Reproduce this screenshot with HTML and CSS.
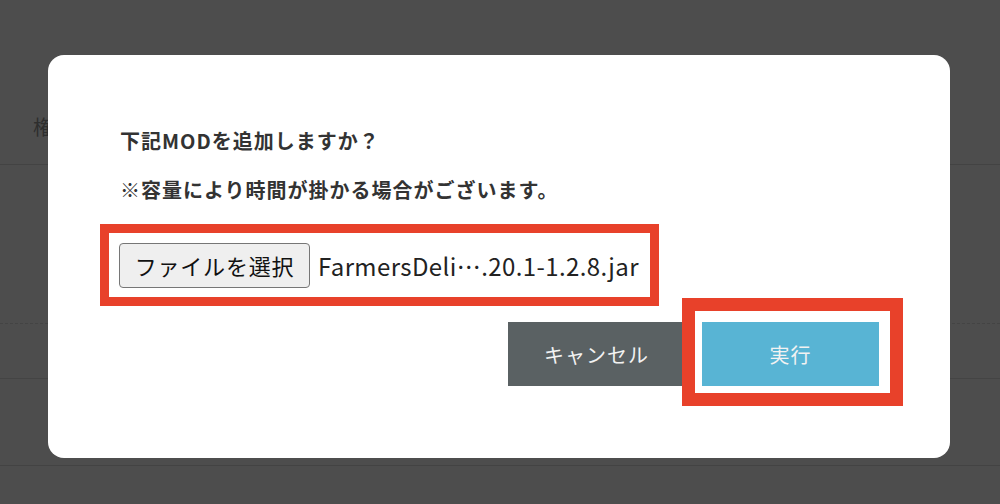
FILE: index.html
```html
<!DOCTYPE html>
<html lang="ja">
<head>
<meta charset="utf-8">
<title>MOD追加</title>
<link rel="stylesheet" href="styles.css">
</head>
<body>
<div class="page">
  <div class="page-head"><span class="tab-label">権限設定</span></div>
  <div class="page-row row-a"></div>
  <div class="page-row row-b"></div>
  <div class="page-row row-c"></div>
</div>
<div class="modal">
  <p class="msg">下記MODを追加しますか？</p>
  <p class="msg">※容量により時間が掛かる場合がございます。</p>
  <div class="file-box">
    <button class="file-btn" type="button">ファイルを選択</button>
    <span class="file-name">FarmersDeli….20.1-1.2.8.jar</span>
  </div>
  <div class="actions">
    <button class="btn btn-cancel" type="button">キャンセル</button>
    <button class="btn btn-run" type="button">実行</button>
  </div>
</div>
</body>
</html>
```
FILE: styles.css
```css
* { box-sizing: border-box; }
html, body {
  margin: 0;
  padding: 0;
  width: 1000px;
  height: 504px;
  overflow: hidden;
  background: #4d4d4d;
  font-family: "Noto Sans CJK JP", "Noto Sans", sans-serif;
}
.page {
  width: 1000px;
}
.page-head {
  height: 165px;
  border-bottom: 1px solid #434343;
  padding: 112px 0 0 33px;
}
.tab-label {
  font-size: 20px;
  line-height: 30px;
  color: #2e2e2e;
}
.row-a {
  height: 159px;
  border-bottom: 1px dashed #444;
}
.row-b {
  height: 55px;
  border-bottom: 1px solid #444;
}
.row-c {
  height: 87px;
  border-bottom: 1px solid #434343;
}
.modal {
  position: absolute;
  left: 48px;
  top: 55px;
  width: 902px;
  height: 403px;
  background: #fff;
  border-radius: 16px;
  padding: 71px 71px 0 52px;
}
.msg {
  margin: 0 0 19px 20px;
  font-size: 20px;
  line-height: 30px;
  font-weight: 700;
  letter-spacing: 1px;
  color: #333;
}
.file-box {
  width: 559px;
  height: 82px;
  border: 9px solid #e8412a;
  padding: 9px 10px;
  margin-top: 1px;
  display: flex;
  align-items: center;
  gap: 8px;
}
.file-btn {
  height: 45px;
  width: 191px;
  padding: 0;
  background: #efefef;
  border: 1px solid #767676;
  border-radius: 4px;
  font-family: inherit;
  font-size: 22px;
  letter-spacing: 0.8px;
  color: #111;
  line-height: 1;
}
.file-name {
  font-size: 24px;
  letter-spacing: 0.4px;
  color: #222;
  white-space: nowrap;
}
.actions {
  display: flex;
  justify-content: flex-end;
  gap: 17px;
  margin-top: 16px;
}
.btn {
  width: 177px;
  height: 64px;
  border: none;
  border-radius: 0;
  font-family: inherit;
  font-size: 20px;
  letter-spacing: 1px;
  color: #f2f2f2;
  padding: 0;
}
.btn-cancel {
  background: #5a6163;
}
.btn-run {
  background: #58b4d4;
  position: relative;
}
.btn-run::after {
  content: "";
  position: absolute;
  left: -20px;
  right: -24px;
  top: -24px;
  bottom: -20px;
  border: 13px solid #e8412a;
}
```
